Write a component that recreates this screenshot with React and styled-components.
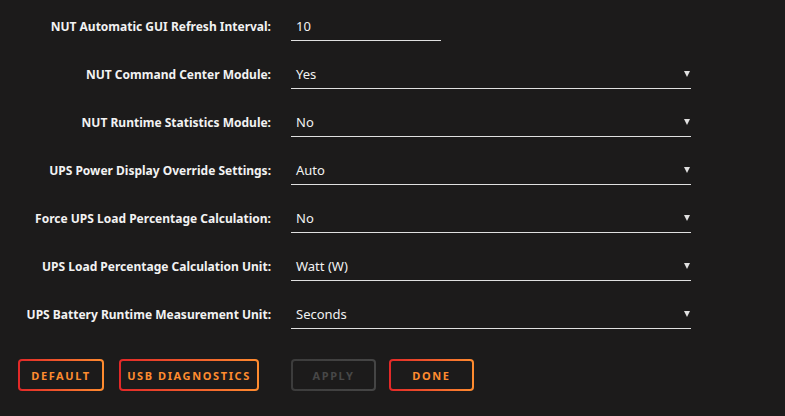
import styled, { createGlobalStyle } from "styled-components";

const GlobalStyle = createGlobalStyle`
  html, body {
    margin: 0;
    padding: 0;
    background: #1c1b1b;
  }
  body {
    font-family: "Noto Sans", "Open Sans", sans-serif;
    color: #f2f2f2;
  }
`;

const Page = styled.div`
  width: 785px;
  height: 416px;
  padding-top: 2px;
  box-sizing: border-box;
  background: #1c1b1b;
`;

const Row = styled.div`
  display: grid;
  grid-template-columns: 271px 1fr;
  column-gap: 20px;
  align-items: center;
  height: 48px;
`;

const Label = styled.div`
  text-align: right;
  font-size: 12px;
  font-weight: 700;
  color: #f2f2f2;
`;

const Field = styled.div`
  display: flex;
  align-items: center;
  justify-content: space-between;
  width: ${(p) => (p.$narrow ? "150px" : "400px")};
  height: 30px;
  box-sizing: border-box;
  padding: 0 1px 0 5px;
  border-bottom: 1px solid #e0e0e0;
  font-size: 13px;
  color: #f2f2f2;
`;

const Arrow = styled.svg`
  width: 6px;
  height: 6px;
  display: block;
`;

const Footer = styled.div`
  display: grid;
  grid-template-columns: 271px 1fr;
  column-gap: 20px;
  margin-top: 21px;
`;

const ButtonGroup = styled.div`
  display: flex;
  justify-content: ${(p) => (p.$end ? "flex-end" : "flex-start")};
  gap: ${(p) => (p.$end ? "15px" : "13px")};
  padding-right: ${(p) => (p.$end ? "12px" : "0")};
`;

const Button = styled.button`
  width: ${(p) => p.$w}px;
  height: 32px;
  padding: 0;
  box-sizing: border-box;
  white-space: nowrap;
  border: 2px solid transparent;
  border-radius: 4px;
  background:
    linear-gradient(#1c1b1b, #1c1b1b) padding-box,
    ${(p) =>
      p.disabled
        ? "linear-gradient(90deg, #3c3c3c, #454545) border-box"
        : "linear-gradient(90deg, #e22828, #ff8c2f) border-box"};
  color: ${(p) => (p.disabled ? "#474747" : "#ff8c2f")};
  font-family: "Noto Sans", "Open Sans", sans-serif;
  font-size: 11px;
  font-weight: 700;
  letter-spacing: 1.6px;
  text-transform: uppercase;
  cursor: pointer;
`;

const rows = [
  { label: "NUT Automatic GUI Refresh Interval:", value: "10", input: true },
  { label: "NUT Command Center Module:", value: "Yes" },
  { label: "NUT Runtime Statistics Module:", value: "No" },
  { label: "UPS Power Display Override Settings:", value: "Auto" },
  { label: "Force UPS Load Percentage Calculation:", value: "No" },
  { label: "UPS Load Percentage Calculation Unit:", value: "Watt (W)" },
  { label: "UPS Battery Runtime Measurement Unit:", value: "Seconds" },
];

export default function App() {
  return (
    <Page>
      <GlobalStyle />
      {rows.map((r) => (
        <Row key={r.label}>
          <Label>{r.label}</Label>
          <Field $narrow={r.input}>
            <span>{r.value}</span>
            {!r.input && (
              <Arrow viewBox="0 0 6 6">
                <polygon points="0,0 6,0 3,6" fill="#e0e0e0" />
              </Arrow>
            )}
          </Field>
        </Row>
      ))}
      <Footer>
        <ButtonGroup $end>
          <Button $w={86}>Default</Button>
          <Button $w={140}>USB Diagnostics</Button>
        </ButtonGroup>
        <ButtonGroup>
          <Button $w={85} disabled>Apply</Button>
          <Button $w={85}>Done</Button>
        </ButtonGroup>
      </Footer>
    </Page>
  );
}
